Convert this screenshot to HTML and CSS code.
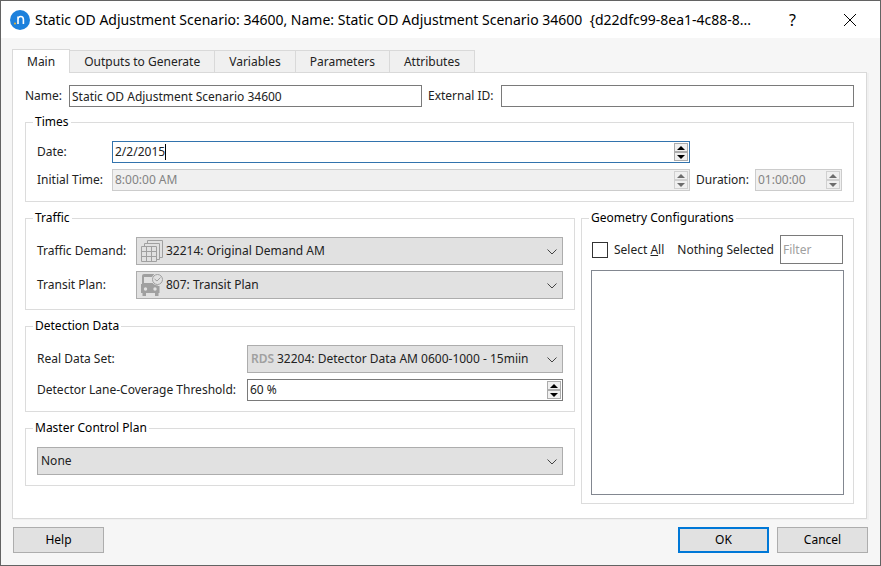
FILE: index.html
```html
<!DOCTYPE html>
<html lang="en">
<head>
  <meta charset="UTF-8">
  <title>Static OD Adjustment Scenario</title>
  <link rel="stylesheet" href="styles.css">
</head>
<body>

<div class="dialog">
  <header class="titlebar">
    <svg class="logo" width="20" height="20" viewBox="0 0 20 20">
      <circle cx="10" cy="10" r="10" fill="#1c80dc"/>
      <path d="M8 14V6.500M8 9.500C8 7.400 9.200 6.500 10.700 6.500S13.400 7.400 13.400 9.500V14" fill="none" stroke="#fff" stroke-width="1.600"/>
      <circle cx="5" cy="13.500" r="1" fill="#f0b429"/>
    </svg>
    <h1>Static OD Adjustment Scenario: 34600, Name: Static OD Adjustment Scenario 34600&nbsp; {d22dfc99-8ea1-4c88-8...</h1>
    <button class="win-btn" type="button">?</button>
    <button class="win-btn" type="button" aria-label="Close">
      <svg width="14" height="14" viewBox="0 0 14 14"><path d="M1 1L13 13M13 1L1 13" stroke="#000" fill="none"/></svg>
    </button>
  </header>

  <form class="content">
    <nav class="tabs" role="tablist">
      <button class="tab active" type="button" role="tab">Main</button>
      <button class="tab" type="button" role="tab">Outputs to Generate</button>
      <button class="tab" type="button" role="tab">Variables</button>
      <button class="tab" type="button" role="tab">Parameters</button>
      <button class="tab" type="button" role="tab">Attributes</button>
    </nav>

    <div class="panel">
      <div class="names">
        <label class="name-label" for="name">Name:</label>
        <input class="field" type="text" id="name" value="Static OD Adjustment Scenario 34600">
        <label class="external-label" for="external">External ID:</label>
        <input class="field" type="text" id="external">
      </div>

      <fieldset class="times">
        <legend>Times</legend>
        <div class="row">
          <label class="time-label" for="date">Date:</label>
          <div class="spin time-box focused">
            <input class="fit" type="text" id="date" size="8" value="2/2/2015"><span class="caret"></span>
            <div class="steps">
              <button type="button" aria-label="Next date"><i class="up"></i></button>
              <button type="button" aria-label="Previous date"><i class="down"></i></button>
            </div>
          </div>
          <span class="spacer"></span>
        </div>
        <div class="row">
          <label class="time-label" for="initial">Initial Time:</label>
          <div class="spin time-box disabled">
            <input type="text" id="initial" value="8:00:00 AM" disabled>
            <div class="steps">
              <button type="button" aria-label="Later" disabled><i class="up"></i></button>
              <button type="button" aria-label="Earlier" disabled><i class="down"></i></button>
            </div>
          </div>
          <div class="spacer duration">
            <label for="duration">Duration:</label>
            <div class="spin disabled">
              <input type="text" id="duration" value="01:00:00" disabled>
              <div class="steps">
                <button type="button" aria-label="Longer" disabled><i class="up"></i></button>
                <button type="button" aria-label="Shorter" disabled><i class="down"></i></button>
              </div>
            </div>
          </div>
        </div>
      </fieldset>

      <div class="columns">
        <div class="left">
          <fieldset>
            <legend>Traffic</legend>
            <div class="row">
              <label class="traffic-label" for="demand">Traffic Demand:</label>
              <div class="combo has-icon">
                <svg class="icon" width="22" height="22" viewBox="0 0 22 22" fill="none" stroke="#a0a0a0">
                  <path d="M6.500 3V.500H21.500V17.500H19M3.500 6V3.500H18.500V19.500H16"/>
                  <path d="M.500 6.500H15.500V21.500H.500ZM5.500 6.500V21.500M10.500 6.500V21.500M.500 11.500H15.500M.500 16.500H15.500"/>
                </svg>
                <select id="demand"><option>32214: Original Demand AM</option></select>
                <svg class="chevron" width="10" height="6" viewBox="0 0 10 6"><path d="M.500 .500L5 5L9.500 .500"/></svg>
              </div>
            </div>
            <div class="row">
              <label class="traffic-label" for="transit">Transit Plan:</label>
              <div class="combo has-icon">
                <svg class="icon" width="22" height="22" viewBox="0 0 22 22">
                  <path d="M3 0H13V3H3V9H17V12H18.500V19H17.500V22H14V19H5V22H1.500V19H0V10H1V2Q1 0 3 0Z" fill="#a0a0a0"/>
                  <circle cx="4.500" cy="15" r="1.700" fill="#e1e1e1"/>
                  <circle cx="14" cy="15" r="1.700" fill="#e1e1e1"/>
                  <circle cx="16.500" cy="5.500" r="6" fill="#e1e1e1"/>
                  <circle cx="16.500" cy="5.500" r="5" fill="none" stroke="#a0a0a0"/>
                  <path d="M13.500 5L16 7L19.500 3.500" fill="none" stroke="#a0a0a0"/>
                </svg>
                <select id="transit"><option>807: Transit Plan</option></select>
                <svg class="chevron" width="10" height="6" viewBox="0 0 10 6"><path d="M.500 .500L5 5L9.500 .500"/></svg>
              </div>
            </div>
          </fieldset>

          <fieldset>
            <legend>Detection Data</legend>
            <div class="row">
              <label class="detect-label" for="dataset">Real Data Set:</label>
              <div class="combo has-icon">
                <span class="icon rds">RDS</span>
                <select id="dataset"><option>32204: Detector Data AM 0600-1000 - 15miin</option></select>
                <svg class="chevron" width="10" height="6" viewBox="0 0 10 6"><path d="M.500 .500L5 5L9.500 .500"/></svg>
              </div>
            </div>
            <div class="row">
              <label class="detect-label" for="threshold">Detector Lane-Coverage Threshold:</label>
              <div class="spin">
                <input type="text" id="threshold" value="60 %">
                <div class="steps">
                  <button type="button" aria-label="Increase"><i class="up"></i></button>
                  <button type="button" aria-label="Decrease"><i class="down"></i></button>
                </div>
              </div>
            </div>
          </fieldset>

          <fieldset>
            <legend>Master Control Plan</legend>
            <div class="combo">
              <select aria-label="Master Control Plan"><option>None</option></select>
              <svg class="chevron" width="10" height="6" viewBox="0 0 10 6"><path d="M.500 .500L5 5L9.500 .500"/></svg>
            </div>
          </fieldset>
        </div>

        <fieldset class="geometry">
          <legend>Geometry Configurations</legend>
          <div class="geometry-body">
            <div class="filter-row">
              <label class="check"><input type="checkbox"><span>Select <u>A</u>ll</span></label>
              <span>Nothing Selected</span>
              <input class="field filter" type="text" placeholder="Filter" aria-label="Filter">
            </div>
            <div class="list"></div>
          </div>
        </fieldset>
      </div>
    </div>

    <footer class="actions">
      <button class="btn help" type="button">Help</button>
      <button class="btn primary" type="button">OK</button>
      <button class="btn" type="button">Cancel</button>
    </footer>
  </form>
</div>

</body>
</html>
```
FILE: styles.css
```css
* {
  box-sizing: border-box;
}

body {
  margin: 0;
  font-family: "Noto Sans", Tahoma, sans-serif;
  font-size: 12px;
  line-height: 16px;
  color: #222;
}

input, select, button {
  font: inherit;
  color: inherit;
  margin: 0;
  border-radius: 0;
}

label, legend, span {
  white-space: nowrap;
}

.dialog {
  display: flex;
  flex-direction: column;
  min-height: 100vh;
  border: 1px solid #636363;
  background: #f6f6f6;
}

/* title bar */
.titlebar {
  display: flex;
  align-items: center;
  height: 37px;
  padding: 0 2px 0 9px;
  background: #fff;
  color: #000;
}

.titlebar h1 {
  flex: 1;
  min-width: 0;
  margin: 0 0 0 5px;
  overflow: hidden;
  font-size: 14px;
  font-weight: normal;
  line-height: 20px;
  white-space: nowrap;
}

.win-btn {
  display: flex;
  align-items: center;
  justify-content: center;
  flex: none;
  width: 57px;
  height: 36px;
  padding: 0;
  border: none;
  background: none;
  font-size: 16px;
}

.content {
  display: flex;
  flex: 1;
  flex-direction: column;
  padding: 11px 12px 12px 11px;
}

/* tabs */
.tabs {
  display: flex;
  align-items: flex-end;
  height: 23px;
}

.tab {
  height: 22px;
  margin-left: -1px;
  padding: 0 14px;
  border: 1px solid #d9d9d9;
  border-bottom: none;
  background: #f0f0f0;
}

.tab.active {
  position: relative;
  height: 24px;
  margin: 0 0 -1px;
  background: #fff;
}

.panel {
  display: flex;
  flex: 1;
  flex-direction: column;
  margin-right: 1px;
  padding: 12px;
  padding-bottom: 14px;
  border: 1px solid #d9d9d9;
  background: #fff;
  box-shadow: 2px 1px 0 #f0f0f0;
}

.names, .row {
  display: flex;
  align-items: center;
  gap: 6px;
}

.name-label {
  width: 38px;
}

.external-label {
  width: 67px;
}

.field {
  flex: 1;
  min-width: 0;
  height: 22px;
  padding: 0 2px;
  border: 1px solid #7a7a7a;
  background: #fff;
}

/* group boxes */
fieldset {
  min-width: 0;
  margin: 0;
  padding: 11px 11px 10px;
  border: 1px solid #dcdcdc;
}

legend {
  margin-left: -4px;
  padding: 0 2px;
  color: #000;
}

.row + .row {
  margin-top: 6px;
}

.times {
  margin: 7px 0 8px;
}

.time-label {
  width: 69px;
}

.time-box {
  flex: 1;
}

.spacer {
  width: 146px;
}

.duration {
  display: flex;
  align-items: center;
  gap: 6px;
}

/* spin boxes */
.spin {
  display: flex;
  align-items: center;
  flex: 1;
  min-width: 0;
  height: 22px;
  padding: 1px;
  border: 1px solid #7a7a7a;
  background: #fff;
}

.spin input {
  flex: 1;
  min-width: 0;
  height: 16px;
  padding: 0 0 0 1px;
  border: none;
  outline: none;
  background: none;
}

.spin .fit {
  flex: none;
  field-sizing: content;
}

.caret {
  width: 1px;
  height: 16px;
  background: #000;
}

.spin.focused {
  border-color: #3273ad;
}

.spin.disabled {
  border-color: #ccc;
  background: #f0f0f0;
  color: #838383;
}

.steps {
  display: flex;
  flex-direction: column;
  flex: none;
  width: 14px;
  height: 18px;
  margin-left: auto;
}

.steps button {
  display: flex;
  align-items: center;
  justify-content: center;
  flex: 1;
  padding: 0;
  border: 1px solid #acacac;
  background: #f0f0f0;
}

.disabled .steps button {
  border-color: #d0d0d0;
}

.up, .down {
  border: 4px solid transparent;
}

.up {
  border-top: none;
  border-bottom-color: #000;
}

.down {
  border-bottom: none;
  border-top-color: #000;
}

.disabled .up {
  border-bottom-color: #6d6d6d;
}

.disabled .down {
  border-top-color: #6d6d6d;
}

/* combo boxes */
.combo {
  position: relative;
  flex: 1;
  min-width: 0;
}

.combo select {
  display: block;
  width: 100%;
  height: 28px;
  padding: 0 22px 0 3px;
  border: 1px solid #adadad;
  appearance: none;
  background: #e1e1e1;
}

.combo.has-icon select {
  padding-left: 29px;
}

.combo .icon {
  position: absolute;
  top: 3px;
  left: 5px;
}

.combo .rds {
  top: 6px;
  left: 4px;
  color: #a0a0a0;
  font-weight: 600;
}

.chevron {
  position: absolute;
  top: 12px;
  right: 6px;
  fill: none;
  stroke: #444;
  pointer-events: none;
}

.columns {
  display: grid;
  flex: 1;
  grid-template-columns: minmax(0, 1fr) 273px;
  gap: 6px;
}

.left {
  display: flex;
  flex-direction: column;
  gap: 8px;
}

.traffic-label {
  width: 93px;
}

.detect-label {
  width: 204px;
}

/* geometry configurations */
.geometry {
  display: flex;
  flex-direction: column;
  padding: 9px 9px 8px;
}

.geometry legend {
  margin-left: -2px;
}

.geometry-body {
  display: flex;
  flex: 1;
  flex-direction: column;
  gap: 6px;
}

.filter-row {
  display: flex;
  align-items: center;
}

.check {
  display: flex;
  align-items: center;
  gap: 6px;
  margin-right: 13px;
}

.check input {
  width: 16px;
  height: 16px;
  margin-left: 1px;
  border: 1px solid #333;
  appearance: none;
  background: #fff;
}

.filter {
  height: 29px;
  margin: 0 1px 0 6px;
}

.filter::placeholder {
  color: #a0a0a0;
}

.list {
  flex: 1;
  min-height: 100px;
  border: 1px solid #828790;
}

/* bottom buttons */
.actions {
  display: flex;
  gap: 8px;
  margin: 8px 0 0 1px;
}

.btn {
  width: 91px;
  height: 26px;
  padding: 0;
  border: 1px solid #adadad;
  background: #e1e1e1;
  color: #000;
}

.help {
  margin-right: auto;
}

.primary {
  border: 2px solid #0078d7;
}
```
